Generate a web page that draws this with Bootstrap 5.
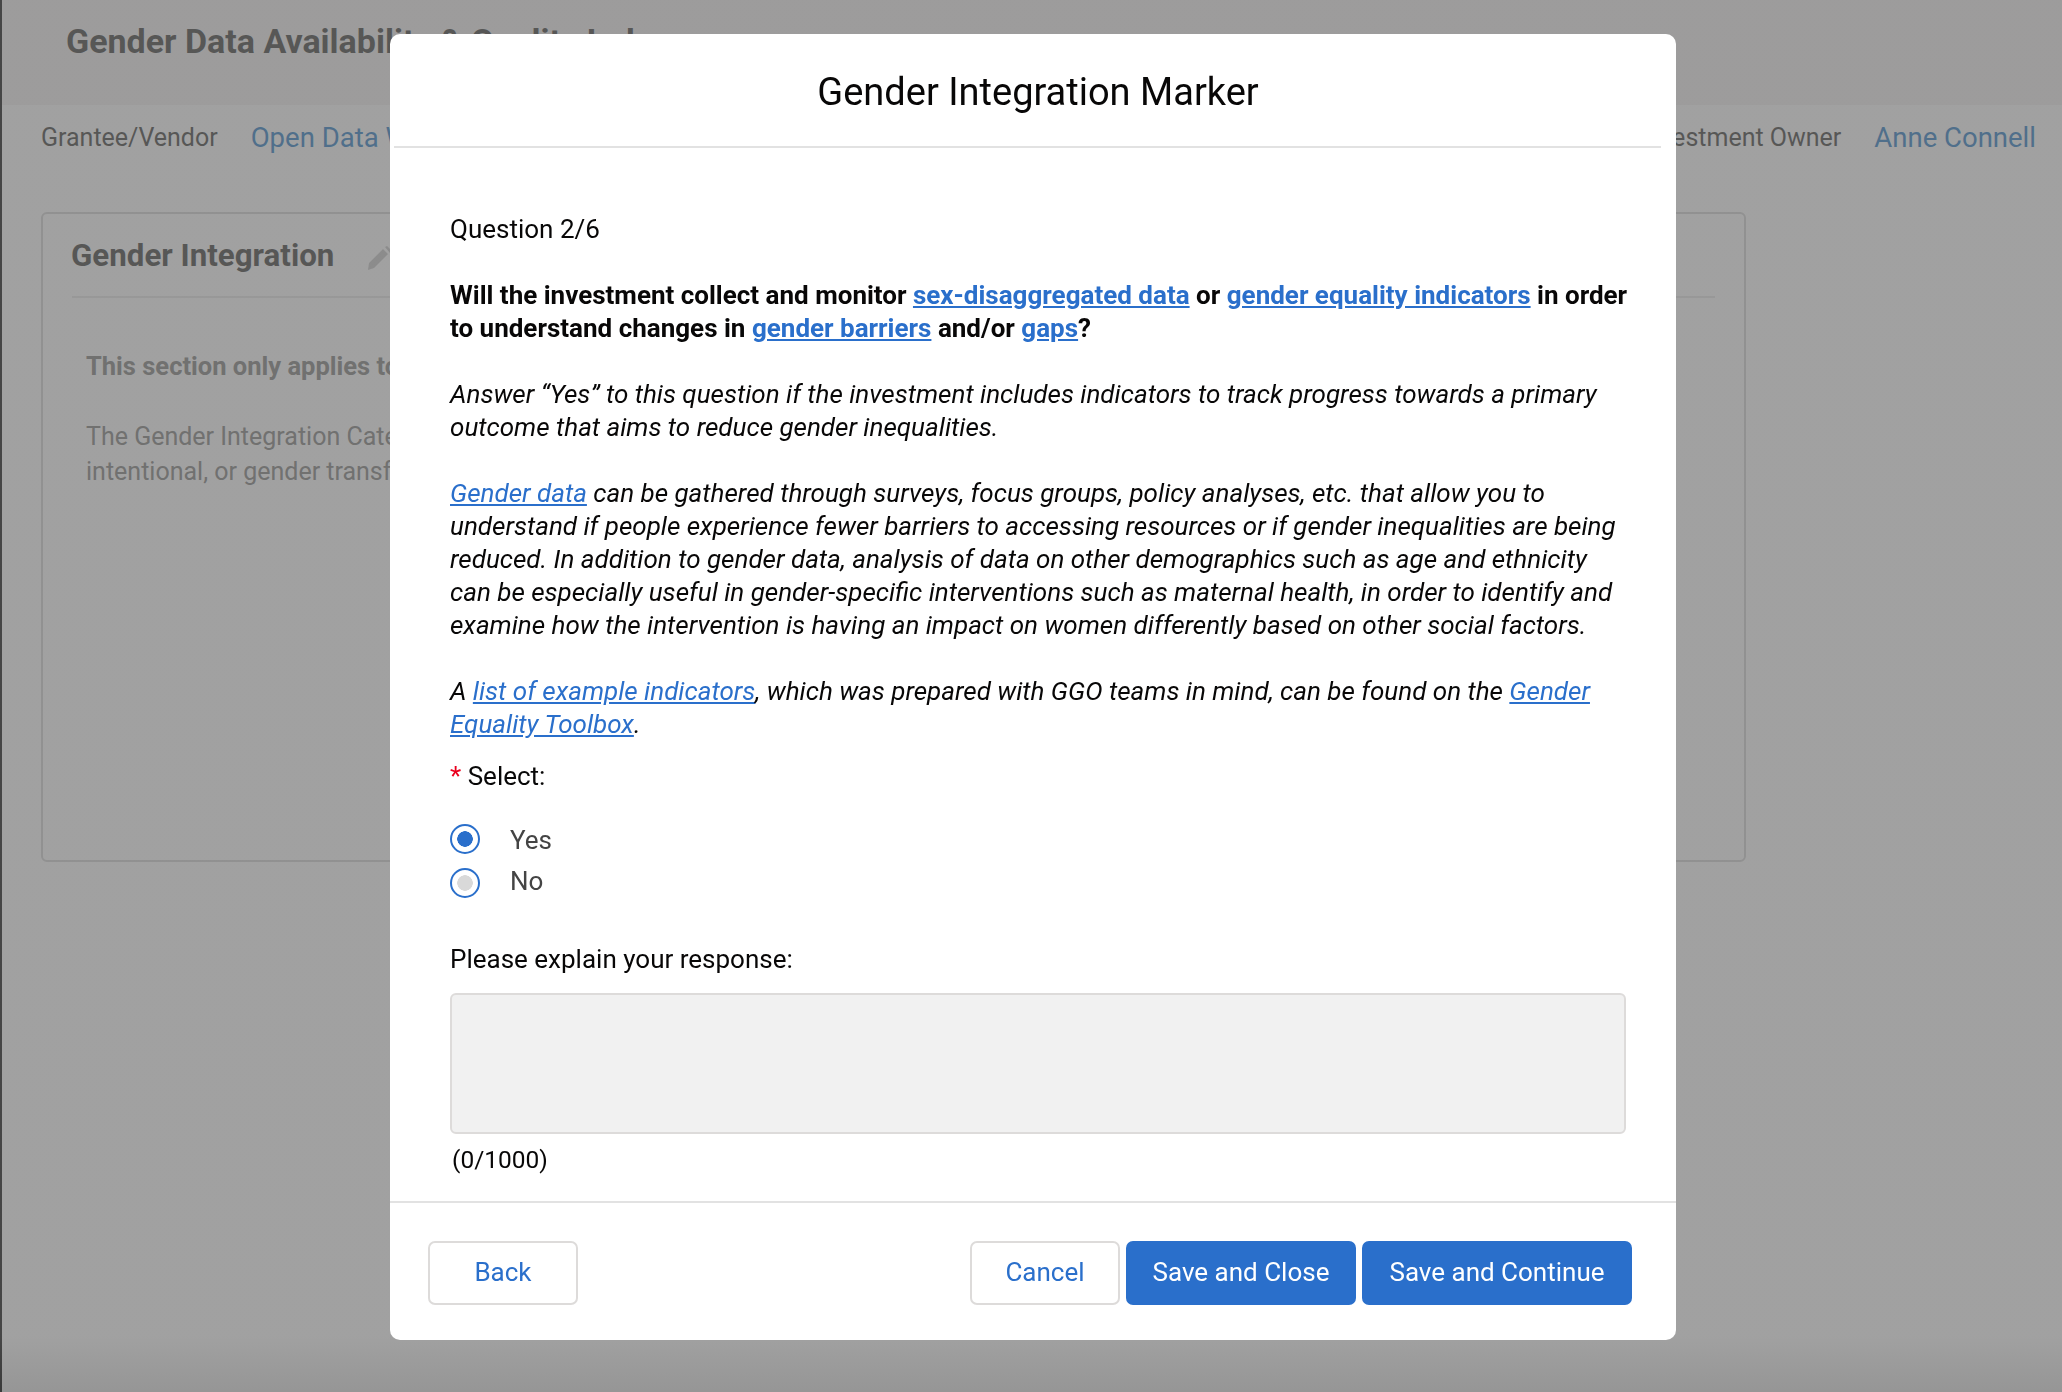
<!DOCTYPE html>
<html lang="en">
<head>
  <meta charset="UTF-8" />
  <title>Gender Integration Marker</title>
  <link href="https://cdn.jsdelivr.net/npm/bootstrap@5.3.3/dist/css/bootstrap.min.css" rel="stylesheet">
  <style>
    html, body { height: 100%; }
    body {
      font-family: Roboto, "Liberation Sans", sans-serif;
      font-size: 26px;
      color: #3e3e3c;
      background: #fff;
      overflow: hidden;
      border-left: 2px solid #111;
    }
    a { color: #2a6fcb; }

    /* page behind the dialog */
    .page-band { height: 105px; background: #f3f2f2; padding: 18px 64px 0; }
    .page-band h1 { font-size: 34px; font-weight: 700; line-height: 46px; margin: 0; }
    .info-row { padding: 15px 26px 0 39px; line-height: 36px; font-size: 25px; }
    .info-row .d-flex { gap: 33px; }
    .info-link { color: #2a7cc4; text-decoration: none; font-size: 27.5px; }
    .section-box {
      width: 1705px; height: 650px; margin: 56px 0 0 39px;
      border: 2px solid #d4d4d4; border-radius: 6px; padding: 23px 29px;
    }
    .section-head { height: 61px; border-bottom: 2px solid #e8e8e8; gap: 32px; margin-left: 0; }
    .section-head h2 { font-size: 31.3px; font-weight: 700; margin: 0 0 0 -1px; }
    .section-head svg { margin-top: 8px; }
    .section-text { padding: 51px 14px 0; color: #80807e; line-height: 35px; font-size: 25px; }
    .section-text b { display: block; margin-bottom: 35px; font-size: 25.5px; }

    /* dialog */
    .modal-backdrop.show { background: linear-gradient(#676767 96%, #555); opacity: .62; }
    .modal { overflow: hidden; }
    .marker-dialog { max-width: 1286px; width: 1286px; margin: 34px 0 0 390px; }
    .marker-dialog .modal-content { border: 0; border-radius: 10px; color: #080707; }
    .marker-dialog .modal-header {
      height: 114px; margin: 0 15px 0 4px; padding: 0; justify-content: center;
      border-bottom: 2px solid #e2e2e2;
    }
    .marker-dialog .modal-title { font-size: 38px; font-weight: 400; line-height: 1; margin: 4px 0 0 21px; }
    .marker-dialog .modal-body { padding: 65px 46px 0 60px; line-height: 33px; }
    .marker-dialog .modal-body p { margin-bottom: 33px; }
    .marker-dialog .modal-footer {
      height: 139px; padding: 2px 44px 0 38px; border-top: 2px solid #e2e2e2;
      justify-content: space-between; flex-wrap: nowrap;
    }
    .req { color: #ea001e; }
    .select-label { margin: -14px 0 24px; }
    .radio-row { height: 44px; gap: 30px; margin: 0; padding: 0; color: #444; }
    .radio-row .form-check-input {
      float: none; width: 30px; height: 30px; margin: 0;
      border: 2px solid #2a6fcb; background-color: #fff; opacity: 1;
    }
    .radio-row .form-check-input:checked { background-image: radial-gradient(circle, #2a6fcb 7.5px, transparent 8px); }
    .radio-row .form-check-input:disabled { background-image: radial-gradient(circle, #d9d9d9 7.5px, transparent 8px); }
    .radio-row .form-check-label { opacity: 1 !important; color: #444; }
    .label-yes { margin-top: 2px; }
    .label-no { margin-top: -3px; }
    .explain-label { margin: 38px 0 17px; }
    .marker-dialog textarea.form-control {
      width: 1176px; height: 141px; background: #f1f1f1; border: 2px solid #dddbda;
      border-radius: 6px; resize: none; box-shadow: none;
    }
    .count-text { padding: 9px 0 25px 2px; font-size: 24.5px; }
    .btn-row { gap: 6px; }
    .marker-btn { height: 64px; font-size: 26px; border-radius: 7px; padding: 0; }
    .btn-plain { width: 150px; background: #fff; color: #2a6fcb; border: 2px solid #dddbda; }
    .btn-fill { background: #2a6fcb; color: #fff; border: 0; }
    .w-close { width: 230px; }
    .w-next { width: 270px; }
  </style>
</head>
<body>

  <!-- Page behind -->
  <div class="page-band"><h1>Gender Data Availability &amp; Quality Index</h1></div>
  <div class="info-row d-flex justify-content-between">
    <div class="d-flex"><span>Grantee/Vendor</span><a class="info-link" href="#">Open Data Watch</a></div>
    <div class="d-flex"><span>Investment Owner</span><a class="info-link" href="#">Anne Connell</a></div>
  </div>
  <div class="section-box">
    <div class="section-head d-flex align-items-start">
      <h2>Gender Integration</h2>
      <svg width="26" height="26" viewBox="0 0 26 26" fill="#c8c8c8"><path d="M3 18 17 4l5 5L8 23l-6 2zM19 2l2-1 4 4-1 3z"/></svg>
    </div>
    <div class="section-text">
      <b>This section only applies to</b>
      The Gender Integration Category<br>intentional, or gender transformative
    </div>
  </div>

  <!-- Dialog -->
  <div class="modal-backdrop show"></div>
  <div class="modal d-block" tabindex="-1">
    <div class="modal-dialog marker-dialog">
      <div class="modal-content">
        <div class="modal-header">
          <h5 class="modal-title">Gender Integration Marker</h5>
        </div>
        <div class="modal-body">
          <p>Question 2/6</p>
          <p><b>Will the investment collect and monitor <a href="#">sex-disaggregated data</a> or <a href="#">gender equality indicators</a> in order to understand changes in <a href="#">gender barriers</a> and/or <a href="#">gaps</a>?</b></p>
          <p><i>Answer “Yes” to this question if the investment includes indicators to track progress towards a primary outcome that aims to reduce gender inequalities.</i></p>
          <p><i><a href="#">Gender data</a> can be gathered through surveys, focus groups, policy analyses, etc. that allow you to understand if people experience fewer barriers to accessing resources or if gender inequalities are being reduced. In addition to gender data, analysis of data on other demographics such as age and ethnicity can be especially useful in gender-specific interventions such as maternal health, in order to identify and examine how the intervention is having an impact on women differently based on other social factors.</i></p>
          <p><i>A <a href="#">list of example indicators</a>, which was prepared with GGO teams in mind, can be found on the <a href="#">Gender Equality Toolbox</a>.</i></p>
          <div class="select-label"><span class="req">*</span> Select:</div>
          <div class="form-check radio-row d-flex align-items-center">
            <input class="form-check-input" type="radio" name="marker" id="ansYes" checked>
            <label class="form-check-label label-yes" for="ansYes">Yes</label>
          </div>
          <div class="form-check radio-row d-flex align-items-center">
            <input class="form-check-input" type="radio" name="marker" id="ansNo" disabled>
            <label class="form-check-label label-no" for="ansNo">No</label>
          </div>
          <div class="explain-label">Please explain your response:</div>
          <textarea class="form-control" aria-label="Explain"></textarea>
          <div class="count-text">(0/1000)</div>
        </div>
        <div class="modal-footer">
          <button class="btn marker-btn btn-plain m-0" type="button">Back</button>
          <div class="d-flex btn-row m-0">
            <button class="btn marker-btn btn-plain" type="button">Cancel</button>
            <button class="btn marker-btn btn-fill w-close" type="button">Save and Close</button>
            <button class="btn marker-btn btn-fill w-next" type="button">Save and Continue</button>
          </div>
        </div>
      </div>
    </div>
  </div>

</body>
</html>
